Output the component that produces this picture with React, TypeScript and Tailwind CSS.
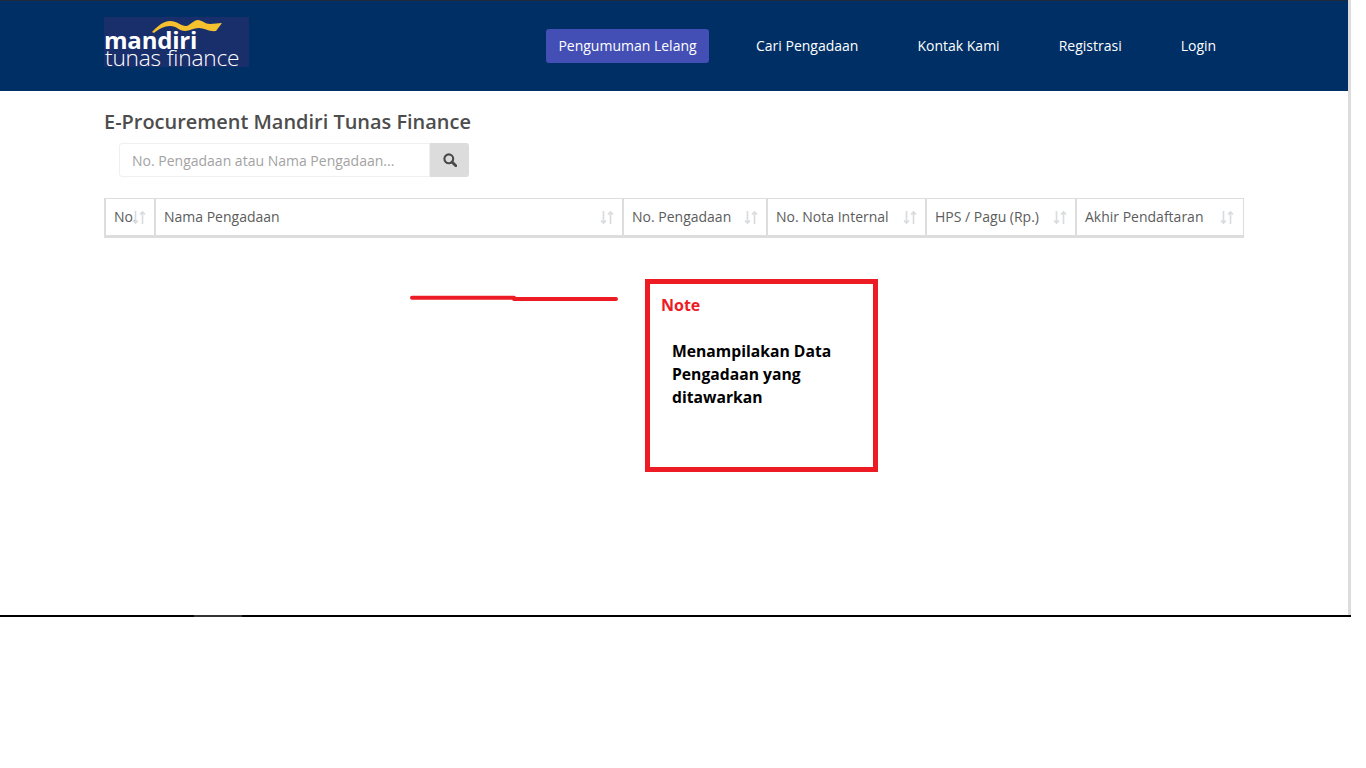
const columns = [
  { label: "No.", width: "w-[50px]" },
  { label: "Nama Pengadaan", width: "w-[468px]" },
  { label: "No. Pengadaan", width: "w-[144px]" },
  { label: "No. Nota Internal", width: "w-[159px]" },
  { label: "HPS / Pagu (Rp.)", width: "w-[150px]" },
  { label: "Akhir Pendaftaran", width: "w-[167px]" },
];

const navItems = ["Cari Pengadaan", "Kontak Kami", "Registrasi", "Login"];

function SortIcon() {
  return (
    <svg width="14" height="15" viewBox="0 0 14 15" fill="none" stroke="#d9dcdf" strokeWidth="1.7" className="absolute right-[8px] top-[11px]">
      <path d="M3.5 1v12M1 10.5 3.5 13 6 10.5" />
      <path d="M10.5 14V2M8 4.5 10.5 2 13 4.5" />
    </svg>
  );
}

function SearchIcon() {
  return (
    <svg width="14" height="14" viewBox="0 0 14 14" fill="none" stroke="#4a4a4a">
      <circle cx="5.8" cy="5.8" r="4.4" strokeWidth="2.1" />
      <path d="M9 9l3.8 3.8" strokeWidth="2.8" strokeLinecap="round" />
    </svg>
  );
}

function Logo() {
  return (
    <div className="relative h-[50px] w-[145px] bg-[#182f6c] pt-[14px] font-['Open_Sans',sans-serif] text-white">
      <svg width="70" height="14" viewBox="0 0 70 14" className="absolute left-[48px] top-[3px]">
        <path d="M0 12C6 6 11 1 18 1C25 1 29 6 34 6C38 6 41 0 46 0C50 0 53 4 58 4L70 3L64 11C58 12 52 8 47 8C41 8 38 11 33 11C27 11 25 6 18 6C12 6 7 9 2 13Z" fill="#f5c12e" />
      </svg>
      <div className="text-2xl leading-[18px] font-bold tracking-[-0.2px]">mandiri</div>
      <div className="ml-[1px] mt-[1px] text-[22.7px] leading-[16px] font-light tracking-[-0.2px] whitespace-nowrap">tunas finance</div>
    </div>
  );
}

export default function App() {
  return (
    <div className="flex h-[768px] overflow-hidden bg-white font-['Open_Sans',sans-serif]">
      <div className="w-[1348px] shrink-0">
        <header className="h-[91px] border-t border-[#1f2a3a] bg-[#002f65] flex items-start pl-[104px]">
          <div className="mt-[16px]">
            <Logo />
          </div>
          <nav className="ml-[297px] mt-[28px] flex items-center text-sm text-white">
            <a className="h-[34px] w-[163px] rounded-[3px] bg-[#434fb5] flex items-center justify-center">Pengumuman Lelang</a>
            <a className="ml-[47px]">{navItems[0]}</a>
            <a className="ml-[59px]">{navItems[1]}</a>
            <a className="ml-[59px]">{navItems[2]}</a>
            <a className="ml-[59px]">{navItems[3]}</a>
          </nav>
        </header>

        <main className="pl-[104px]">
          <h1 className="mt-[17px] text-[19.95px] leading-[28px] font-semibold text-[#4d4d4d]">E-Procurement Mandiri Tunas Finance</h1>
          <div className="ml-[15px] mt-[7px] flex h-[34px] w-[350px]">
            <div className="flex-1 flex items-center rounded-l-[3px] border border-[#f0f0f0] pl-[12px] pt-[1px] text-sm text-[#a3a3a3]">
              No. Pengadaan atau Nama Pengadaan...
            </div>
            <div className="w-[39px] flex items-center justify-center rounded-r-[3px] bg-[#dcdcdc]">
              <SearchIcon />
            </div>
          </div>

          <div className="mt-[21px] flex h-[40px] w-[1140px] border-l-2 border-r border-t border-b-[3px] border-[#dddddd]">
            {columns.map((col, i) => (
              <div
                key={col.label}
                className={`relative ${col.width} ${i === 0 ? "ml-[-2px] pl-[10px]" : "border-l-2 border-[#dddddd] pl-[8px]"} shrink-0 flex items-center text-sm text-[#5c5c5c] whitespace-nowrap`}
              >
                {col.label}
                <SortIcon />
              </div>
            ))}
          </div>

          <div className="mt-[41px] flex items-start">
            <svg width="212" height="8" viewBox="0 0 212 8" className="ml-[305px] mt-[16px] shrink-0">
              <path d="M3 2.8H105M105 4H207" stroke="#ed1c24" strokeWidth="4" strokeLinecap="round" />
            </svg>
            <div className="ml-[24px] h-[193px] w-[233px] border-[5px] border-[#ed1c24]">
              <div className="ml-[11px] mt-[10px] text-base leading-[22px] font-bold text-[#ed1c24]">Note</div>
              <p className="ml-[22px] mt-[24px] w-[180px] text-[15.7px] leading-[23px] font-bold text-black">
                Menampilakan Data Pengadaan yang ditawarkan
              </p>
            </div>
          </div>
        </main>

        <div className="mt-[143px] flex h-[2px] w-[1351px] bg-black">
          <div className="ml-[194px] h-[2px] w-[48px] bg-[#333333]" />
        </div>
      </div>
      <div className="h-[615px] w-[3px] shrink-0 bg-[#dcdcdc]" />
    </div>
  );
}
